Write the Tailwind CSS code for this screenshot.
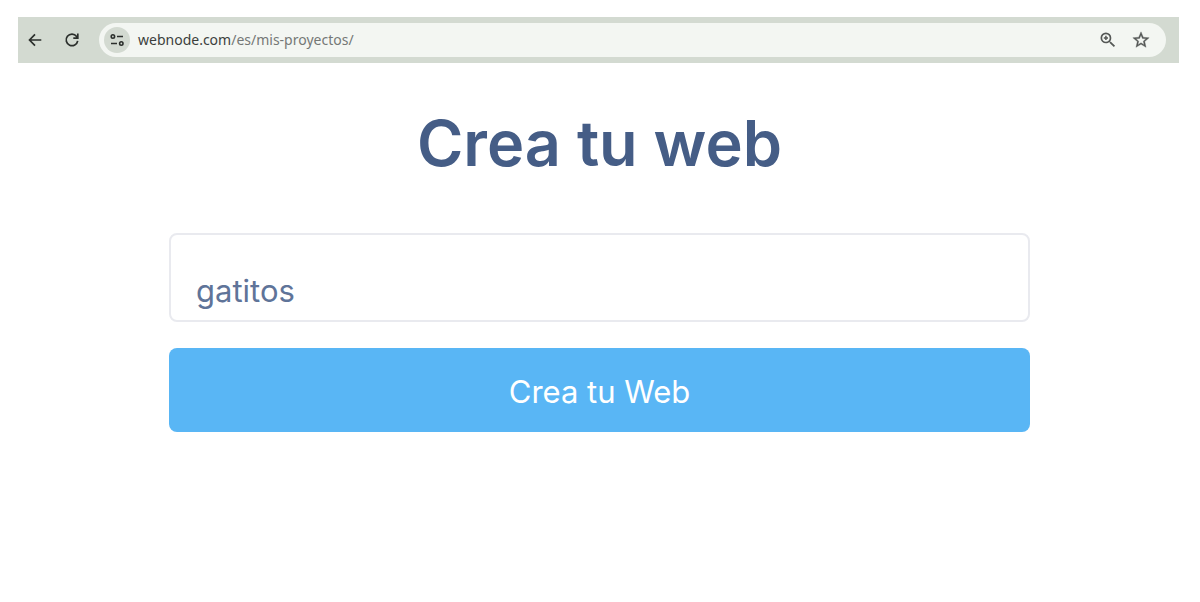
<!DOCTYPE html>
<html lang="es">
<head>
  <meta charset="UTF-8">
  <meta name="viewport" content="width=device-width, initial-scale=1.0">
  <title>Crea tu web</title>
  <script src="https://cdn.jsdelivr.net/npm/@tailwindcss/browser@4"></script>
</head>
<body class="min-h-screen bg-white pt-[17px] font-['Inter',sans-serif]">

  <!-- Barra del navegador -->
  <header class="ml-[18px] mr-[21px] flex h-[46px] items-center bg-[#d3dad1] pl-2 pr-[13px]">
    <button type="button" aria-label="Atrás" class="flex size-[18px] items-center justify-center text-[#2b2f2c]">
      <svg class="size-[18px]" viewBox="0 0 18 18" fill="none" stroke="currentColor" stroke-width="1.7"><path d="M15.300 9H3.800M9 3.300L3.500 9 9 14.700"/></svg>
    </button>
    <button type="button" aria-label="Recargar" class="ml-[19px] flex size-[18px] items-center justify-center text-[#2b2f2c]">
      <svg class="size-[18px]" viewBox="0 0 18 18" fill="none" stroke="currentColor" stroke-width="1.7"><path d="M14.700 9.800A5.800 5.800 0 1 1 13.600 5.400L14.600 6.800M14.800 2.600v4.500h-4.500"/></svg>
    </button>

    <div class="ml-[18px] flex h-[34px] flex-1 items-center rounded-full bg-[#f3f6f2] pl-[5px] pr-4">
      <button type="button" aria-label="Información del sitio" class="flex size-[26px] shrink-0 items-center justify-center rounded-full bg-[#d3dad1] text-[#2b2f2c]">
        <svg class="size-4" viewBox="0 0 16 16" fill="none" stroke="currentColor" stroke-width="1.6">
          <circle cx="3.900" cy="4.500" r="1.700"/>
          <path d="M8 4.500h6M2 11.500h6"/>
          <circle cx="12.300" cy="11.500" r="1.700"/>
        </svg>
      </button>
      <div class="ml-2 flex-1 font-['Noto_Sans',sans-serif] text-sm text-[#757876]"><span class="text-[#3c3f3d]">webnode.com</span>/es/mis-proyectos/</div>
      <button type="button" aria-label="Zoom" class="flex size-5 items-center justify-center text-[#555856]">
        <svg class="size-5" viewBox="0 0 24 24" fill="currentColor"><path d="M15.500 14h-.79l-.28-.27A6.470 6.470 0 0 0 16 9.500 6.500 6.500 0 1 0 9.500 16c1.610 0 3.090-.59 4.230-1.570l.27.28v.79l5 4.990L20.490 19l-4.990-5zm-6 0C7.010 14 5 11.990 5 9.500S7.010 5 9.500 5 14 7.010 14 9.500 11.990 14 9.500 14zM8.600 7h1.800v1.600H12v1.800h-1.600V12H8.600v-1.600H7V8.600h1.600z"/></svg>
      </button>
      <button type="button" aria-label="Favoritos" class="ml-[14px] flex size-[18px] items-center justify-center text-[#555856]">
        <svg class="size-[18px]" viewBox="1 1 22 22" fill="currentColor" stroke="currentColor" stroke-width="0.4"><path d="M22 9.240l-7.190-.62L12 2 9.190 8.630 2 9.240l5.460 4.730L5.820 21 12 17.270 18.180 21l-1.630-7.030L22 9.240zM12 15.400l-3.760 2.270 1-4.280-3.320-2.880 4.380-.38L12 6.100l1.710 4.040 4.380.38-3.320 2.880 1 4.280L12 15.400z"/></svg>
      </button>
    </div>
  </header>

  <!-- Formulario -->
  <main class="pl-[169px] pr-[170px] pt-10">
    <h1 class="text-center text-[63px] leading-[80px] font-semibold text-[#455d86]">Crea tu web</h1>
    <form class="mt-[50px]" onsubmit="return false">
      <input type="text" aria-label="Nombre del proyecto" value="gatitos" class="block h-[89px] w-full rounded-lg border-2 border-[#e9eaef] px-[25px] pt-[26px] text-[31px] text-[#5f7499] outline-none">
      <button type="submit" class="mt-[26px] block h-[84px] w-full rounded-lg bg-[#59b6f5] pt-1 text-[31px] text-white">Crea tu Web</button>
    </form>
  </main>

</body>
</html>
